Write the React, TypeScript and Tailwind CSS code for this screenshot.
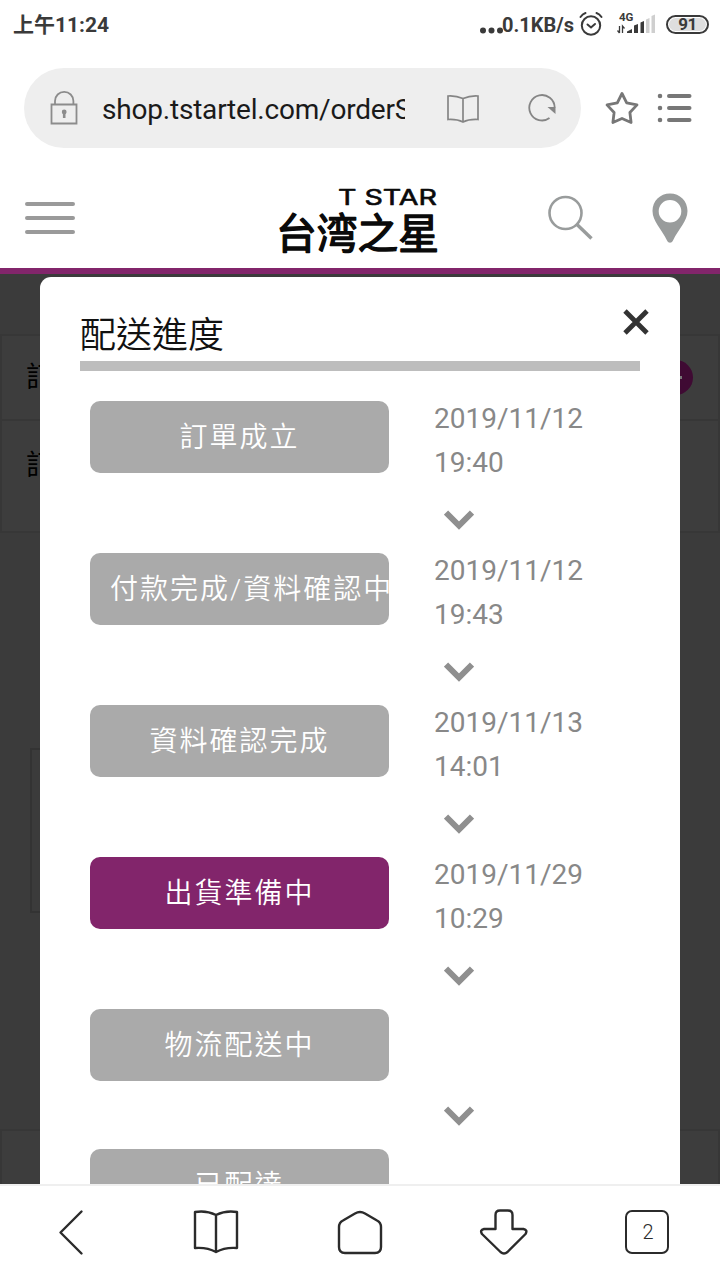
import clsx from "clsx";

type TStep = {
	label: string;
	date?: string;
	time?: string;
	active?: boolean;
};

const steps: TStep[] = [
	{ label: "訂單成立", date: "2019/11/12", time: "19:40" },
	{ label: "付款完成/資料確認中", date: "2019/11/12", time: "19:43" },
	{ label: "資料確認完成", date: "2019/11/13", time: "14:01" },
	{ label: "出貨準備中", date: "2019/11/29", time: "10:29", active: true },
	{ label: "物流配送中" },
	{ label: "已配達" },
];

const StatusBar = () => (
	<div className="flex h-12 items-center justify-between pl-[13px] pr-[11px] text-[#3a3a3a]">
		<div className="whitespace-nowrap pt-0.5 text-[21px] font-bold leading-none">
			上午11:24
		</div>
		<div className="flex items-center">
			<svg width="26" height="24" viewBox="0 0 26 24" fill="currentColor">
				<circle cx="3" cy="18.5" r="3" />
				<circle cx="11.5" cy="18.5" r="3" />
				<circle cx="20" cy="18.5" r="3" />
			</svg>
			<span className="-ml-1 w-[72px] whitespace-nowrap pt-0.5 text-[20px] font-bold leading-none">
				0.1KB/s
			</span>
			<svg
				width="24"
				height="26"
				viewBox="0 0 24 26"
				fill="none"
				stroke="currentColor"
				strokeWidth="2"
				strokeLinecap="round"
				className="ml-[5px]"
			>
				<circle cx="12" cy="14.5" r="9.2" />
				<path d="M8.5 13.5l3.5 3 4-3.5M1.5 6q2-3 5-4M22.5 6q-2-3-5-4" />
			</svg>
			<svg width="40" height="24" viewBox="0 0 40 24" className="ml-[14px]">
				<text
					x="2"
					y="9"
					fontSize="11.5"
					fontWeight="700"
					fill="currentColor"
				>
					4G
				</text>
				<path
					d="M2.5 14v7M.5 18.5L2.5 21M5.5 21v-7l2 2.5"
					fill="none"
					stroke="currentColor"
					strokeWidth="1.3"
				/>
				<path
					d="M10 21v-1.5l5-2.5v4zM17 13.5l4-1.5v9h-4zM23.5 10.5l3.5-1.5v12h-3.5z"
					fill="currentColor"
				/>
				<path d="M29 7.5l3.5-1.5v15h-3.5zM34.5 4l3.5-1.5v18.5h-3.5z" fill="#cfcfcf" />
			</svg>
			<div className="ml-[9px] flex h-[19px] w-[43px] items-center rounded-full border-2 border-[#3a3a3a] p-px">
				<div className="flex h-[13px] w-[37px] items-center justify-center rounded-full bg-[#dedede] text-[17px] font-bold leading-none tracking-[-0.5px]">
					91
				</div>
			</div>
		</div>
	</div>
);

const AddressBar = () => (
	<div className="flex h-[120px] pl-6 pt-5">
		<div className="flex h-20 w-[557px] items-center rounded-full bg-[#eee] pl-[26px]">
			<svg
				width="28"
				height="36"
				viewBox="0 0 28 36"
				fill="none"
				stroke="#8c8c8c"
				strokeWidth="1.8"
			>
				<path d="M1.5 14.5h25v19h-25zM5 14.5V11a9.2 9.2 0 0 1 18.4 0v3.5" />
				<circle cx="14.2" cy="22" r="2.4" fill="#8c8c8c" stroke="none" />
				<path d="M14.2 22v6" strokeWidth="2.6" />
			</svg>
			<div className="ml-6 w-[303px] overflow-hidden whitespace-nowrap pt-[3px] text-[28px] leading-10 tracking-[-0.2px] text-[#1a1a1a]">
				shop.tstartel.com/orderS
			</div>
			<svg
				width="34"
				height="30"
				viewBox="0 0 34 30"
				fill="none"
				stroke="#858585"
				strokeWidth="1.7"
				className="ml-[41px] mt-px"
			>
				<path d="M17 4.5Q10 1.5 2 2v23.5q9-.5 15 2.5 6-3 15-2.5V2q-8-.5-15 2.5zV28" />
			</svg>
			<svg
				width="30"
				height="30"
				viewBox="0 0 30 30"
				fill="none"
				stroke="#858585"
				strokeWidth="1.8"
				className="ml-[47px]"
			>
				<path d="M27.7 14.5A12.7 12.7 0 1 0 22.5 25" />
				<path d="M20.5 14h8v7z" fill="#858585" stroke="none" />
			</svg>
		</div>
		<svg
			width="34"
			height="34"
			viewBox="0 0 34 34"
			fill="none"
			stroke="#777"
			strokeWidth="2.8"
			strokeLinejoin="round"
			className="ml-6 mt-[23px]"
		>
			<path d="M17 2.5l4.7 9.4 10.3 2-7.1 7.6 1.2 10L17 27.5l-9.1 4 1.2-10L2 13.9l10.3-2z" />
		</svg>
		<svg
			width="36"
			height="34"
			viewBox="0 0 36 34"
			stroke="#777"
			strokeWidth="4"
			strokeLinecap="round"
			className="ml-[18px] mt-[23px]"
		>
			<path d="M12 5h20.5M12 17h20.5M12 29h20.5" />
			<path d="M3 5h.01M3 17h.01M3 29h.01" strokeWidth="4.6" />
		</svg>
	</div>
);

const SiteHeader = () => (
	<header className="flex h-[106px] border-b-[6px] border-[#82256b] pt-[18px]">
		<svg
			width="50"
			height="34"
			viewBox="0 0 50 34"
			stroke="#9a9a9a"
			strokeWidth="4"
			strokeLinecap="round"
			className="ml-[25px] mt-[15px]"
		>
			<path d="M2 3h46M2 17h46M2 31h46" />
		</svg>
		{/* logo */}
		<svg
			width="164"
			height="70"
			viewBox="0 0 164 70"
			fill="#0a0a0a"
			stroke="#0a0a0a"
			strokeLinejoin="round"
			className="ml-[201px]"
		>
			<text
				x="62"
				y="18.5"
				fontSize="22"
				fontWeight="400"
				strokeWidth="0.6"
				textLength="99"
				lengthAdjust="spacingAndGlyphs"
				className="font-['Inter',sans-serif]"
			>
				T STAR
			</text>
			<text
				x="0"
				y="62.5"
				fontSize="41.5"
				fontWeight="400"
				strokeWidth="1.4"
				textLength="163"
				lengthAdjust="spacingAndGlyphs"
			>
				台湾之星
			</text>
		</svg>
		<svg
			width="46"
			height="48"
			viewBox="0 0 46 48"
			fill="none"
			stroke="#999c9c"
			className="ml-[107px] mt-[9px]"
		>
			<circle cx="18.5" cy="18" r="16" strokeWidth="2.6" />
			<path d="M30 29.5l14.5 14" strokeWidth="3.4" />
		</svg>
		<svg width="36" height="52" viewBox="0 0 36 52" className="ml-[59px] mt-[7px]">
			<path
				d="M18 .5C8 .5.5 8 .5 18c0 10 9 18 14.5 29.5 1.5 3 4.5 3 6 0C26.5 36 35.5 28 35.5 18 35.5 8 28 .5 18 .5zM18 7a11.3 11.3 0 1 1 0 22.6A11.3 11.3 0 0 1 18 7z"
				fill="#999c9c"
				fillRule="evenodd"
			/>
		</svg>
	</header>
);

// dimmed order page under the dialog
const OrderPage = () => (
	<div className="flex h-full flex-col bg-[#3b3b3b] pt-[60px] text-[28px] leading-10 text-black">
		<div className="flex h-[87px] items-center justify-between border-2 border-[#373737] bg-[#3d3d3d] pl-6 pr-[25px]">
			<span>訂單編號</span>
			<span className="flex size-[35px] items-center justify-center rounded-full bg-[#3f0a33]">
				<span className="h-[3px] w-3 bg-[#777]" />
			</span>
		</div>
		<div className="h-[112px] border-2 border-t-0 border-[#373737] bg-[#3d3d3d] pl-6 pt-[25px]">
			訂單狀態
		</div>
		<div className="ml-[30px] mr-10 mt-[215px] h-[165px] border-2 border-[#333]" />
		<div className="mt-[216px] flex-1 border-2 border-b-0 border-[#373737] bg-[#3d3d3d]" />
	</div>
);

const StepRow = ({ step, last }: { step: TStep; last: boolean }) => (
	<div className={clsx("flex", step.date ? "h-[152px]" : "h-[140px]")}>
		<div
			className={clsx(
				"h-[72px] w-[299px] overflow-hidden rounded-[10px] px-5",
				step.active ? "bg-[#82256b]" : "bg-[#aaa]"
			)}
		>
			<div className="flex h-[73px] items-center whitespace-nowrap text-[28px] font-[350] tracking-[2px] text-white">
				<span className="mx-auto">{step.label}</span>
			</div>
		</div>
		<div className="ml-[45px] flex flex-col text-[28px] leading-[44px] text-[#888]">
			{step.date && (
				<div className="-mt-1 h-[88px]">
					<div>{step.date}</div>
					<div>{step.time}</div>
				</div>
			)}
			{!last && (
				<svg
					width="30"
					height="21"
					viewBox="0 0 30 21"
					fill="none"
					stroke="#8f8f8f"
					strokeWidth="6"
					className={clsx("ml-2.5", step.date ? "mt-[25px]" : "mt-[97px]")}
				>
					<path d="M2 2.5L15 15.5 28 2.5" />
				</svg>
			)}
		</div>
	</div>
);

const ProgressDialog = () => (
	<div className="absolute inset-x-10 bottom-0 top-[3px] overflow-hidden rounded-t-[11px] bg-white px-10">
		<div className="flex h-[84px] justify-between">
			<h2 className="mt-[33px] text-[36px] font-[350] leading-[52px] text-[#111]">
				配送進度
			</h2>
			<svg
				width="26"
				height="26"
				viewBox="0 0 26 26"
				stroke="#333"
				strokeWidth="4.8"
				className="mr-[-9px] mt-[32px]"
			>
				<path d="M2 2l22 22M24 2L2 24" />
			</svg>
		</div>
		<div className="h-[10px] bg-[#bdbdbd]" />
		<div className="pl-2.5 pt-[30.4px]">
			{steps.map((step, i) => (
				<StepRow key={step.label} step={step} last={i === steps.length - 1} />
			))}
		</div>
	</div>
);

const BottomNav = () => (
	<nav className="flex h-24 items-center border-t-2 border-[#efefef] bg-white pb-px">
		{[
			"M81.5 24.5L60.5 45.5 81.5 66.5",
			"M72 28Q62 23 51 25v36q12-1 21 4 9-5 21-4V25q-11-2-21 3zV65",
			"M67 26.5L55 33.5Q51 35.5 51 40v20q0 6 6 6h30q6 0 6-6V40q0-4.5-4-6.5L77 26.5q-5-3-10 0z",
			"M63.5 42V28q0-4.5 4.5-4.5h8q4.5 0 4.5 4.5v14h11q4.5 1 2 5L75.5 65q-3.5 3-7 0L50 47q-2.5-4 2-5z",
		].map((d) => (
			<svg
				key={d}
				width="144"
				height="92"
				viewBox="0 0 144 92"
				fill="none"
				stroke="#2b2b2b"
				strokeWidth="2.4"
				strokeLinecap="round"
				strokeLinejoin="round"
			>
				<path d={d} />
			</svg>
		))}
		<div className="-mt-0.5 ml-[49px] flex size-11 items-center justify-center rounded-[7px] border-[2.5px] border-[#2b2b2b] pl-0.5 text-[20px] font-light text-[#2b2b2b]">
			2
		</div>
	</nav>
);

export default function App() {
	return (
		<div className="flex h-[1280px] w-[720px] flex-col overflow-hidden bg-white font-['Roboto','Noto_Sans_CJK_TC',sans-serif]">
			<StatusBar />
			<AddressBar />
			<SiteHeader />
			<main className="relative h-[910px] overflow-hidden">
				<OrderPage />
				<ProgressDialog />
			</main>
			<BottomNav />
		</div>
	);
}
